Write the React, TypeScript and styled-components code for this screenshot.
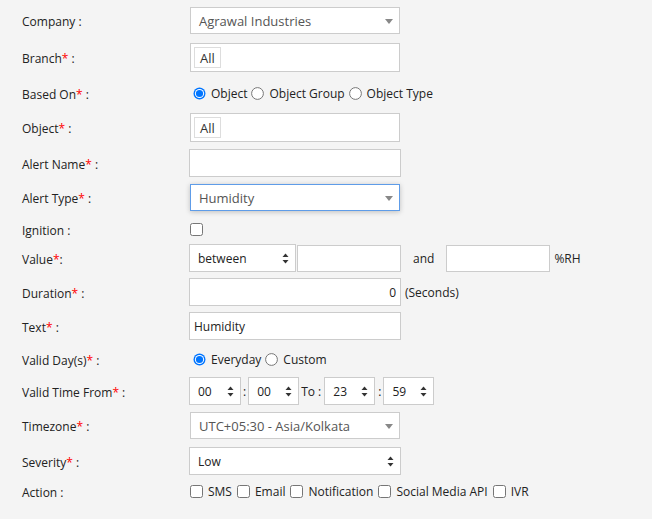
import React from "react";
import styled, { createGlobalStyle } from "styled-components";

const Global = createGlobalStyle`
  html, body { margin: 0; padding: 0; background: #f4f4f4; }
  body { font-family: "Open Sans", "Liberation Sans", sans-serif; color: #222; }
`;

const Page = styled.div`
  width: 652px;
  height: 519px;
  background: #f4f4f4;
  padding: 7px 0 0 22px;
  box-sizing: border-box;
`;

const Row = styled.div<{ $h: number; $mt?: number }>`
  display: flex;
  align-items: center;
  height: ${(p) => p.$h}px;
  margin-top: ${(p) => p.$mt ?? 0}px;
`;

const Label = styled.div`
  width: 168px;
  flex-shrink: 0;
  font-size: 12px;
  color: #222;
  white-space: nowrap;
  padding-top: 2px;
`;

const Req = styled.span`
  color: #ff0000;
`;

const Control = styled.div`
  display: flex;
  align-items: center;
`;

const Select2 = styled.div<{ $focus?: boolean }>`
  width: 210px;
  height: 27px;
  box-sizing: border-box;
  background: #fff;
  border: 1px solid ${(p) => (p.$focus ? "#5e9ce8" : "#ccc")};
  box-shadow: ${(p) => (p.$focus ? "0 1px 5px rgba(0,0,0,0.22)" : "none")};
  display: flex;
  align-items: center;
  justify-content: space-between;
  padding: 1px 6px 0 8px;
  font-size: 13px;
  color: #555;
`;

const Caret = styled.span`
  width: 0;
  height: 0;
  border-left: 4px solid transparent;
  border-right: 4px solid transparent;
  border-top: 5px solid #888;
`;

const Multi = styled.div`
  width: 210px;
  height: 29px;
  box-sizing: border-box;
  background: #fff;
  border: 1px solid #ccc;
  display: flex;
  align-items: center;
  padding-left: 3px;
`;

const Chip = styled.span`
  height: 21px;
  box-sizing: border-box;
  border: 1px solid #ddd;
  padding: 1px 5px 0;
  display: flex;
  align-items: center;
  font-size: 13px;
  color: #333;
`;

const Input = styled.div<{ $w: number; $h?: number; $right?: boolean; $pl?: number }>`
  width: ${(p) => p.$w}px;
  height: ${(p) => p.$h ?? 28}px;
  box-sizing: border-box;
  background: #fff;
  border: 1px solid #ccc;
  display: flex;
  align-items: center;
  justify-content: ${(p) => (p.$right ? "flex-end" : "flex-start")};
  padding: 1px ${(p) => (p.$right ? 4 : 0)}px 0 ${(p) => p.$pl ?? 4}px;
  font-size: 12px;
  color: #222;
`;

const Shift = styled.div`
  margin-left: -1px;
  display: flex;
  align-items: center;
`;

const Native = styled.div<{ $w: number }>`
  width: ${(p) => p.$w}px;
  height: 28px;
  box-sizing: border-box;
  background: #fff;
  border: 1px solid #ccc;
  display: flex;
  align-items: center;
  justify-content: space-between;
  padding: 1px 6px 0 8px;
  font-size: 12px;
  color: #222;
`;

const Text = styled.span<{ $ml?: number; $mr?: number }>`
  font-size: 12px;
  color: #222;
  margin-left: ${(p) => p.$ml ?? 0}px;
  margin-right: ${(p) => p.$mr ?? 0}px;
  white-space: nowrap;
  padding-top: 1px;
`;

const Opt = styled.label<{ $gap?: number }>`
  display: flex;
  align-items: center;
  font-size: 12px;
  color: #222;
  margin-right: ${(p) => p.$gap ?? 1}px;
  white-space: nowrap;
`;

const RadioMark = styled.svg`
  width: 13px;
  height: 13px;
  margin: 0 5px 0 3px;
  flex-shrink: 0;
`;

const CheckMark = styled.svg`
  width: 13px;
  height: 13px;
  margin-right: 5px;
  flex-shrink: 0;
`;

const Spin = () => (
  <svg width="7" height="11" viewBox="0 0 7 11">
    <path d="M3.5 0.5 L6.5 4 L0.5 4 Z" fill="#333" />
    <path d="M3.5 10.5 L6.5 7 L0.5 7 Z" fill="#333" />
  </svg>
);

const Radio = ({ on }: { on?: boolean }) => (
  <RadioMark viewBox="0 0 13 13">
    {on ? (
      <>
        <circle cx="6.5" cy="6.5" r="6" fill="#0075ff" />
        <circle cx="6.5" cy="6.5" r="4.6" fill="#fff" />
        <circle cx="6.5" cy="6.5" r="3.6" fill="#0075ff" />
      </>
    ) : (
      <circle cx="6.5" cy="6.5" r="5.9" fill="#fff" stroke="#767676" strokeWidth="1" />
    )}
  </RadioMark>
);

const Check = () => (
  <CheckMark viewBox="0 0 13 13">
    <rect x="0.5" y="0.5" width="12" height="12" rx="2" fill="#fff" stroke="#767676" strokeWidth="1" />
  </CheckMark>
);

const L = ({ t, req, tight }: { t: string; req?: boolean; tight?: boolean }) => (
  <Label>
    {t}
    {req && <Req>*</Req>}
    {tight ? ":" : " :"}
  </Label>
);

export default function App() {
  return (
    <>
      <Global />
      <Page>
        <Row $h={27}>
          <L t="Company" />
          <Select2>
            Agrawal Industries
            <Caret />
          </Select2>
        </Row>
        <Row $h={29} $mt={9}>
          <L t="Branch" req />
          <Multi>
            <Chip>All</Chip>
          </Multi>
        </Row>
        <Row $h={26} $mt={8}>
          <L t="Based On" req />
          <Control>
            <Opt><Radio on />Object</Opt>
            <Opt><Radio />Object Group</Opt>
            <Opt><Radio />Object Type</Opt>
          </Control>
        </Row>
        <Row $h={29} $mt={7}>
          <L t="Object" req />
          <Multi>
            <Chip>All</Chip>
          </Multi>
        </Row>
        <Row $h={28} $mt={7}>
          <L t="Alert Name" req />
          <Shift>
            <Input $w={212} />
          </Shift>
        </Row>
        <Row $h={27} $mt={7}>
          <L t="Alert Type" req />
          <Select2 $focus>
            Humidity
            <Caret />
          </Select2>
        </Row>
        <Row $h={26} $mt={5}>
          <L t="Ignition" />
          <Check />
        </Row>
        <Row $h={28} $mt={2}>
          <L t="Value" req tight />
          <Shift>
            <Native $w={107}>
              between
              <Spin />
            </Native>
            <Input $w={104} $h={27} style={{ marginLeft: 1 }} />
            <Text $ml={12} $mr={12}>and</Text>
            <Input $w={104} $h={27} />
            <Text $ml={4}>%RH</Text>
          </Shift>
        </Row>
        <Row $h={28} $mt={6}>
          <L t="Duration" req />
          <Shift>
            <Input $w={212} $right>0</Input>
            <Text $ml={4}>(Seconds)</Text>
          </Shift>
        </Row>
        <Row $h={28} $mt={6}>
          <L t="Text" req />
          <Shift>
            <Input $w={212}>Humidity</Input>
          </Shift>
        </Row>
        <Row $h={26} $mt={6}>
          <L t="Valid Day(s)" req />
          <Control>
            <Opt><Radio on />Everyday</Opt>
            <Opt><Radio />Custom</Opt>
          </Control>
        </Row>
        <Row $h={28} $mt={5}>
          <L t="Valid Time From" req />
          <Shift>
            <Native $w={52}>00<Spin /></Native>
            <Text $ml={2} $mr={2}>:</Text>
            <Native $w={51}>00<Spin /></Native>
            <Text $ml={2} $mr={3}>To :</Text>
            <Native $w={51}>23<Spin /></Native>
            <Text $ml={3} $mr={2}>:</Text>
            <Native $w={51}>59<Spin /></Native>
          </Shift>
        </Row>
        <Row $h={27} $mt={7}>
          <L t="Timezone" req />
          <Select2>
            UTC+05:30 - Asia/Kolkata
            <Caret />
          </Select2>
        </Row>
        <Row $h={28} $mt={8}>
          <L t="Severity" req />
          <Shift>
            <Native $w={212}>
              Low
              <Spin />
            </Native>
          </Shift>
        </Row>
        <Row $h={26} $mt={3}>
          <L t="Action" />
          <Control>
            <Opt $gap={5}><Check />SMS</Opt>
            <Opt $gap={5}><Check />Email</Opt>
            <Opt $gap={5}><Check />Notification</Opt>
            <Opt $gap={5}><Check />Social Media API</Opt>
            <Opt $gap={5}><Check />IVR</Opt>
          </Control>
        </Row>
      </Page>
    </>
  );
}
